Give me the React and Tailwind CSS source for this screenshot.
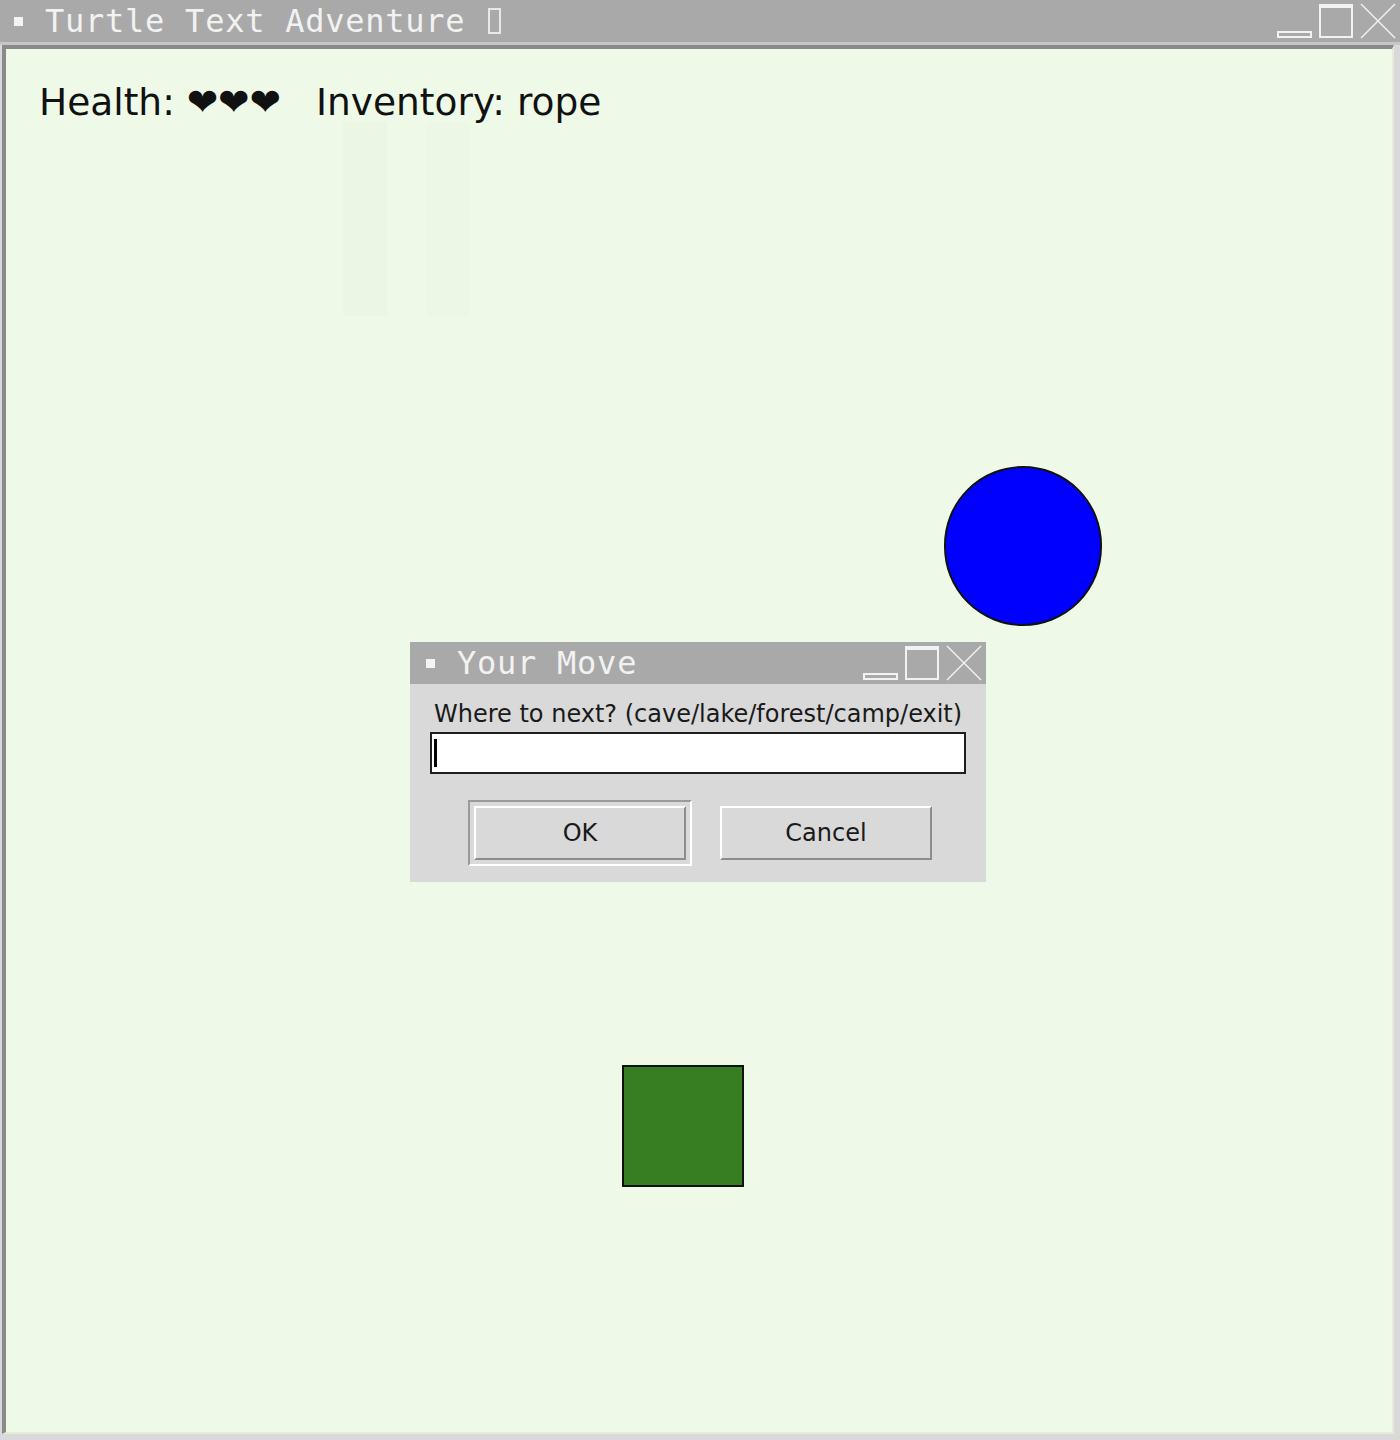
import React from 'react';

const mono = { fontFamily: '"DejaVu Sans Mono", "Liberation Mono", monospace' };
const sans = { fontFamily: '"DejaVu Sans", "Liberation Sans", sans-serif' };

function WinControls({ className }) {
    return (
        <svg className={className} width="120" height="36" viewBox="0 0 120 36" fill="none" stroke="#f2f2f2">
            <rect x="1" y="29" width="33" height="5" strokeWidth="2" />
            <rect x="43" y="2" width="32" height="32" strokeWidth="2" />
            <line x1="43" y1="3" x2="75" y2="3" strokeWidth="4" />
            <line x1="84" y1="1" x2="118" y2="35" strokeWidth="1.5" />
            <line x1="118" y1="1" x2="84" y2="35" strokeWidth="1.5" />
        </svg>
    );
}

function TitleBar({ title, tofu, height, inset = 14 }) {
    return (
        <div className="flex items-center bg-[#a9a9a9] text-[#f2f2f2]" style={{ height }}>
            <div className="h-[9px] w-[9px] bg-[#f4f4f4]" style={{ marginLeft: inset }} />
            <span className="ml-[22px] text-[32px] leading-none tracking-[0.75px] whitespace-pre" style={mono}>
                {title}
            </span>
            {tofu && <span className="ml-[23px] h-[26px] w-[13px] border-2 border-[#e8e8e8]" />}
            <WinControls className="ml-auto mr-[3px]" />
        </div>
    );
}

function Canvas() {
    return (
        <div className="relative flex-1 border-t-4 border-l-4 border-[#8a8a8a] border-r-2 border-b-2 border-r-[#e4ecdc] border-b-[#e4ecdc] bg-[#eff9e8]">
            <div className="flex items-start pl-[33px] pt-[35px] text-[37.5px] leading-none text-[#111]" style={sans}>
                <span>Health: ❤❤❤</span>
                <span className="ml-[35px]">Inventory: rope</span>
            </div>
            {/* faint ghost shapes */}
            <div className="absolute left-[337px] top-[73px] h-[194px] w-[44px] bg-[#ecf6e5]" />
            <div className="absolute left-[421px] top-[73px] h-[194px] w-[42px] bg-[#edf7e6]" />
            {/* blue circle */}
            <div className="absolute left-[938px] top-[417px] h-[160px] w-[158px] rounded-full border-2 border-[#111] bg-[#0000ff]" />
            {/* green square */}
            <div className="absolute left-[616px] top-[1016px] h-[122px] w-[122px] border-2 border-[#111] bg-[#377d22]" />
        </div>
    );
}

function Dialog() {
    return (
        <div className="absolute left-[410px] top-[642px] w-[576px] bg-[#d9d9d9]" style={sans}>
            <TitleBar title="Your Move" height={42} inset={16} />
            <div className="px-[20px] pt-[18px] pb-[16px]">
                <div className="pl-[4px] text-[24px] leading-none text-[#1a1a1a]">
                    Where to next? (cave/lake/forest/camp/exit)
                </div>
                <div className="mt-[6px] flex h-[42px] items-center border-2 border-[#1e1e1e] bg-white pl-[2px]">
                    <div className="h-[28px] w-[3px] bg-black" />
                </div>
                <div className="mt-[26px] flex items-center">
                    <div className="ml-[38px] border-2 border-t-[#9a9a9a] border-l-[#9a9a9a] border-r-white border-b-white p-[4px]">
                        <div className="flex h-[54px] w-[212px] items-center justify-center border-2 border-t-white border-l-white border-r-[#8c8c8c] border-b-[#8c8c8c] text-[24px] text-[#1a1a1a]">
                            OK
                        </div>
                    </div>
                    <div className="ml-[28px] flex h-[54px] w-[212px] items-center justify-center border-2 border-t-white border-l-white border-r-[#8c8c8c] border-b-[#8c8c8c] text-[24px] text-[#1a1a1a]">
                        Cancel
                    </div>
                </div>
            </div>
        </div>
    );
}

export default function App() {
    return (
        <div className="relative flex h-[1440px] w-[1400px] flex-col overflow-hidden bg-[#d9d9d9]">
            <TitleBar title="Turtle Text Adventure" tofu height={42} />
            <div className="h-[3px] bg-[#c6c6c6]" />
            <div className="flex flex-1 flex-col pl-[2px] pr-[6px] pb-[6px]">
                <Canvas />
            </div>
            <Dialog />
        </div>
    );
}
